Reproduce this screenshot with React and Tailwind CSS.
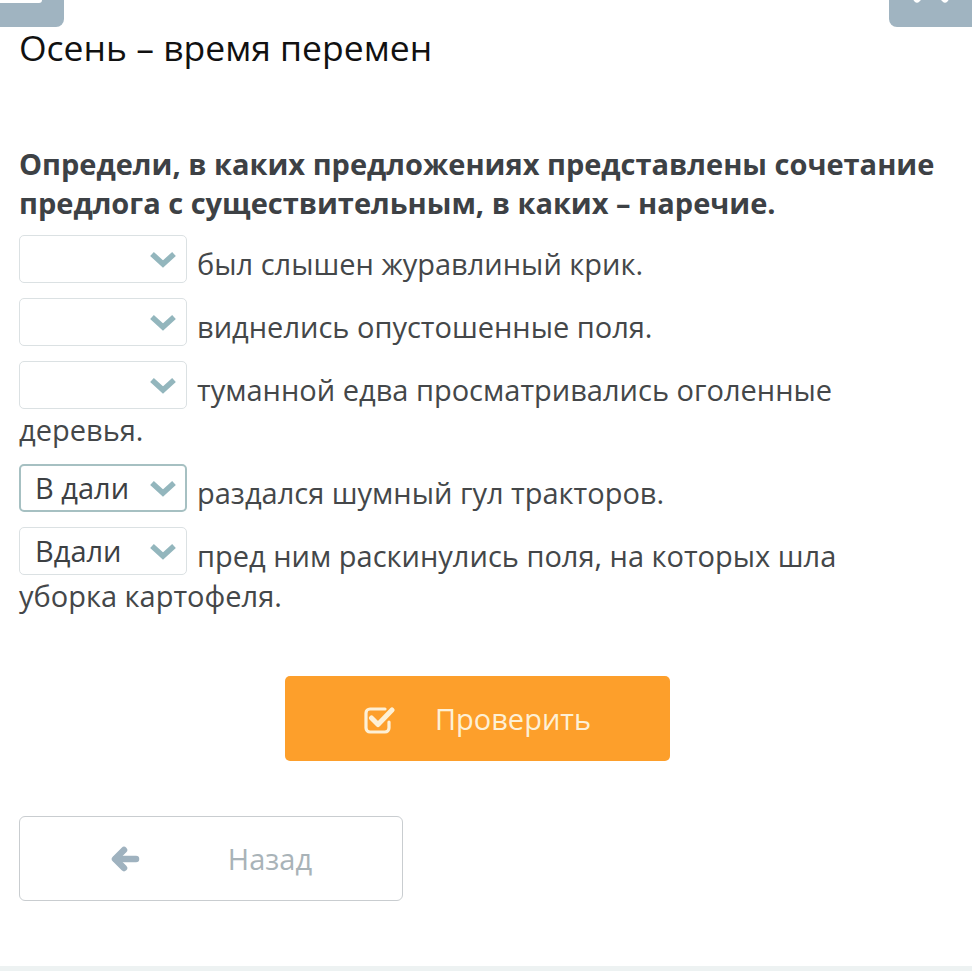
import React from "react";

function Chevron() {
  return (
    <svg width="28" height="18" viewBox="0 0 28 18" className="mt-[1px]">
      <polyline points="3,3 14,13 25,3" fill="none" stroke="#93b6bd" strokeWidth="5.5" strokeLinejoin="miter" strokeLinecap="butt" />
    </svg>
  );
}

function CheckSquare() {
  return (
    <svg width="32" height="30" viewBox="0 0 32 30" className="mr-[40px]">
      <path d="M22 5 H7 a4 4 0 0 0 -4 4 v15 a4 4 0 0 0 4 4 h15 a4 4 0 0 0 4 -4 v-6" fill="none" stroke="#fdf0d6" strokeWidth="3.2" strokeLinecap="round" />
      <polyline points="8.5,14 15,20.5 29,6" fill="none" stroke="#fdf0d6" strokeWidth="5" strokeLinecap="round" strokeLinejoin="round" />
    </svg>
  );
}

function ArrowLeft() {
  return (
    <svg width="30" height="26" viewBox="0 0 30 26" className="mr-[88px]">
      <line x1="26" y1="13" x2="6" y2="13" stroke="#9fb2bf" strokeWidth="6.5" strokeLinecap="round" />
      <polyline points="14,4 5,13 14,22" fill="none" stroke="#9fb2bf" strokeWidth="6.5" strokeLinecap="round" strokeLinejoin="round" />
    </svg>
  );
}

function Times() {
  return (
    <svg width="40" height="40" viewBox="0 0 40 40" className="absolute -top-[35px] left-[22px]">
      <line x1="6" y1="6" x2="34" y2="34" stroke="#ffffff" strokeWidth="7" strokeLinecap="round" />
      <line x1="34" y1="6" x2="6" y2="34" stroke="#ffffff" strokeWidth="7" strokeLinecap="round" />
    </svg>
  );
}

function Sel({ value, active }) {
  return (
    <span
      className={
        "inline-block align-[-8px] overflow-hidden w-[168px] h-[48px] mr-[10px] bg-white rounded-[5px] " +
        (active ? "border-2 border-[#a6c0c2]" : "border border-[#dbe1e3]")
      }
    >
      <span className={"flex items-center justify-between h-full " + (active ? "pl-[14px] pr-[8px]" : "pl-[15px] pr-[9px]")}>
        <span className="leading-[40px] text-[#3c4043] whitespace-nowrap">{value || "\u00a0"}</span>
        <Chevron />
      </span>
    </span>
  );
}

function Row({ value, active, children }) {
  return (
    <div className="text-[29px] leading-[40px] text-[#444749] mb-[14px]">
      <Sel value={value} active={active} />
      {children}
    </div>
  );
}

export default function App() {
  return (
    <div
      className="w-[972px] h-[971px] bg-white overflow-hidden flex flex-col"
      style={{ fontFamily: "'Open Sans', 'Noto Sans', sans-serif" }}
    >
      <div className="flex justify-between h-[27px] shrink-0">
        <div className="relative w-[64px] h-[27px] bg-[#a0b4c1] rounded-br-[8px] overflow-hidden">
          <div className="absolute -top-[5px] -left-[4px] w-[46px] h-[8px] rounded-[3px] bg-white" />
        </div>
        <div className="relative w-[83px] h-[27px] bg-[#a0b4c1] rounded-bl-[8px] overflow-hidden">
          <Times />
        </div>
      </div>

      <div className="pl-[19px] pr-[37px]">
        <h1 className="text-[35.5px] leading-[40px] text-[#111111] font-normal">Осень – время перемен</h1>

        <p className="mt-[77px] text-[29px] leading-[39px] font-bold text-[#3d4145]">
          Определи, в каких предложениях представлены сочетание предлога с существительным, в каких – наречие.
        </p>

        <div className="mt-[13px]">
          <Row>был слышен журавлиный крик.</Row>
          <Row>виднелись опустошенные поля.</Row>
          <Row>туманной едва просматривались оголенные деревья.</Row>
          <Row value="В дали" active>раздался шумный гул тракторов.</Row>
          <Row value="Вдали">пред ним раскинулись поля, на которых шла уборка картофеля.</Row>
        </div>

        <button className="mt-[60px] mx-auto flex items-center justify-center w-[385px] h-[85px] rounded-[5px] bg-[#fd9f2b] text-[#fdf0d6] text-[29px]">
          <CheckSquare />
          <span>Проверить</span>
        </button>

        <button className="mt-[55px] flex items-center justify-center w-[384px] h-[85px] rounded-[6px] border border-[#c9cdd0] bg-white text-[#a9b3b8] text-[29px]">
          <ArrowLeft />
          <span>Назад</span>
        </button>
      </div>

      <div className="mt-auto h-[5px] w-full bg-[#edf2f2]" />
    </div>
  );
}
